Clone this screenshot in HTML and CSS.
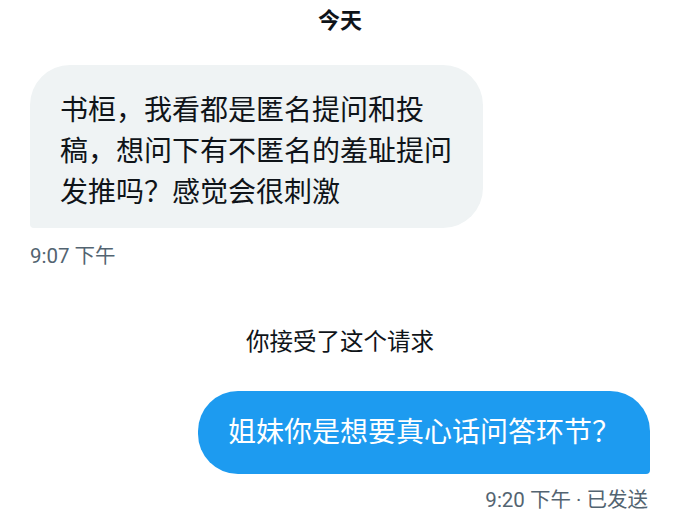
FILE: index.html
```html
<!DOCTYPE html>
<html lang="zh-CN">
<head>
	<meta charset="UTF-8">
	<title>私信</title>
	<link rel="stylesheet" href="styles.css">
</head>
<body>

<div class="chat">
	<div class="day">今天</div>

	<div class="msg in">
		<div class="bubble">书桓，我看都是匿名提问和投稿，想问下有不匿名的羞耻提问发推吗？感觉会很刺激</div>
		<div class="time">9:07 下午</div>
	</div>

	<div class="notice">你接受了这个请求</div>

	<div class="msg out">
		<div class="bubble">姐妹你是想要真心话问答环节？</div>
		<div class="time">9:20 下午 · 已发送</div>
	</div>
</div>

</body>
</html>
```

FILE: styles.css
```css
*{
	margin: 0;
	padding: 0;
	box-sizing: border-box;
}
body{
	background: #fff;
	font-family: Roboto, "Noto Sans CJK SC", sans-serif;
	color: #0f1419;
}
.chat{
	display: flex;
	flex-direction: column;
	padding: 6px 30px 0 30px;
}
.day{
	text-align: center;
	font-size: 22px;
	font-weight: bold;
	line-height: 30px;
}
.msg{
	display: flex;
	flex-direction: column;
}
.msg.in{
	align-items: flex-start;
	margin-top: 29px;
}
.msg.out{
	align-items: flex-end;
	margin-top: 34px;
}
.bubble{
	max-width: 453px;
	font-size: 28px;
	line-height: 41px;
	padding: 21px 30px;
}
.in .bubble{
	background: #eff3f4;
	border-radius: 40px 40px 40px 4px;
	padding: 25px 30px 15px 30px;
}
.out .bubble{
	background: #1d9bf0;
	color: #fff;
	border-radius: 40px 40px 4px 40px;
}
.time{
	font-size: 20.5px;
	line-height: 24px;
	color: #536471;
	margin-top: 16px;
}
.out .time{
	margin-top: 14px;
	margin-right: 2px;
}
.notice{
	text-align: center;
	font-size: 23.5px;
	line-height: 30px;
	margin-top: 59px;
	color: #0f1419;
}
```
